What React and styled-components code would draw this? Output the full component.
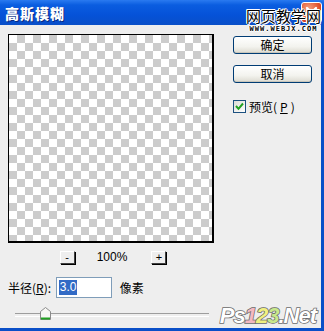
import React from 'react'
import styled, { createGlobalStyle } from 'styled-components'

const Global = createGlobalStyle`
  html, body { margin: 0; padding: 0; background: #ececec; }
  body { font-family: "Noto Sans CJK SC", "Liberation Sans", sans-serif; }
`

const Window = styled.div`
  position: relative;
  width: 324px;
  height: 331px;
  display: flex;
  flex-direction: column;
  overflow: hidden;
`

const TitleBar = styled.div`
  height: 25px;
  flex: none;
  display: flex;
  align-items: center;
  padding-left: 5px;
  background: linear-gradient(#2a7af0 0%, #0a5de0 20%, #0552d8 60%, #0a4fc8 100%);
  color: #fff;
  font-weight: 900;
  font-size: 14px;
  letter-spacing: 1px;
  text-shadow: 1px 1px 0 #0a2a80;
`

const CloseBtn = styled.div`
  position: absolute;
  top: 2px;
  right: 2px;
  width: 21px;
  height: 21px;
  border-radius: 3px;
  border: 1px solid #fff;
  box-sizing: border-box;
  background: radial-gradient(circle at 35% 30%, #f4a080, #e0502a 60%, #c03010);
  display: flex;
  align-items: center;
  justify-content: center;
`

const Stamp = styled.div`
  position: absolute;
  top: 8px;
  left: 246px;
  display: flex;
  flex-direction: column;
  align-items: center;
  gap: 3px;
  color: #000;
`

const StampTitle = styled.div`
  font-size: 15px;
  line-height: 15px;
  height: 15px;
  text-shadow: -1px 0 #fff, 1px 0 #fff, 0 -1px #fff, 0 1px #fff, 1px 1px #fff, -1px -1px #fff;
`

const StampUrl = styled.div`
  font-family: "DejaVu Sans Mono", monospace;
  font-weight: bold;
  font-size: 7px;
  line-height: 7px;
  height: 7px;
  letter-spacing: 1px;
  text-shadow: -1px 0 #fff, 1px 0 #fff, 0 -1px #fff, 0 1px #fff;
`

const Body = styled.div`
  flex: 1;
  background: #eeeeee;
  border-right: 3px solid #0a4fc8;
  border-bottom: 3px solid #0a4fc8;
  display: flex;
  flex-direction: column;
  padding: 9px 0 0 8px;
`

const Main = styled.div`
  display: flex;
  gap: 19px;
`

const LeftCol = styled.div`
  display: flex;
  flex-direction: column;
`

const Preview = styled.div`
  width: 206px;
  height: 209px;
  box-sizing: border-box;
  border: 1px solid #000;
  border-right-width: 2px;
  border-bottom-width: 2px;
  background-color: #fff;
  background-image:
    linear-gradient(45deg, #cccccc 25%, transparent 25%, transparent 75%, #cccccc 75%),
    linear-gradient(45deg, #cccccc 25%, transparent 25%, transparent 75%, #cccccc 75%);
  background-size: 16px 16px;
  background-position: 0 0, 8px 8px;
`

const ZoomRow = styled.div`
  display: flex;
  align-items: center;
  justify-content: center;
  margin-top: 7px;
  padding-left: 4px;
  font-size: 12px;
  color: #000;
`

const ZoomBtn = styled.div`
  width: 15px;
  height: 13px;
  box-sizing: border-box;
  border: 1px solid #fff;
  border-right-color: #404040;
  border-bottom-color: #404040;
  box-shadow: 1px 1px 0 #000;
  display: flex;
  align-items: center;
  justify-content: center;
  font-family: "Liberation Sans", sans-serif;
  font-size: 11px;
  line-height: 1;
`

const Percent = styled.span`
  font-family: "Liberation Sans", sans-serif;
  font-size: 12px;
  margin: 0 24px 0 22px;
`

const RightCol = styled.div`
  display: flex;
  flex-direction: column;
  padding-top: 2px;
`

const Button = styled.button`
  width: 79px;
  height: 18px;
  margin-bottom: ${p => p.$gap || 0}px;
  padding: 0;
  border: 1px solid #003c74;
  border-radius: 3px;
  background: linear-gradient(#ffffff, #f3f3ee 60%, #dcdad0);
  box-shadow: inset 0 -1px 0 #c8c6bc;
  font-family: "Noto Sans CJK SC", sans-serif;
  font-size: 12px;
  line-height: 16px;
  color: #000;
`

const CheckRow = styled.label`
  display: flex;
  align-items: center;
  gap: 3px;
  font-size: 12px;
  color: #000;
`

const CheckBox = styled.span`
  width: 13px;
  height: 13px;
  box-sizing: border-box;
  border: 1px solid #1c5180;
  background: linear-gradient(135deg, #dcdcd6, #fff);
  display: flex;
  align-items: center;
  justify-content: center;
`

const RadiusRow = styled.div`
  display: flex;
  align-items: center;
  margin-top: 13px;
  font-size: 12px;
  color: #000;
`

const Field = styled.div`
  width: 56px;
  height: 21px;
  box-sizing: border-box;
  margin-left: 2px;
  border: 1px solid #7f9db9;
  background: #fff;
  display: flex;
  align-items: center;
  padding-left: 2px;
`

const Selected = styled.span`
  background: #316ac5;
  color: #fff;
  font-family: "Liberation Sans", sans-serif;
  font-size: 12px;
  line-height: 15px;
  padding: 0 1px;
`

const Unit = styled.span`
  margin-left: 8px;
`

const SliderRow = styled.div`
  position: relative;
  width: 194px;
  height: 14px;
  margin: 9px 0 0 7px;
`

const Track = styled.div`
  position: absolute;
  left: 0;
  right: 0;
  top: 6px;
  height: 2px;
  border-top: 1px solid #9d9d9d;
  border-bottom: 1px solid #fff;
`

const Thumb = styled.svg`
  position: absolute;
  left: 25px;
  top: 0;
`

const Brand = styled.div`
  position: absolute;
  right: 8px;
  bottom: 2px;
  font-family: "Liberation Sans", sans-serif;
  font-weight: bold;
  font-style: italic;
  font-size: 22px;
  letter-spacing: -1px;
  color: #fff;
  -webkit-text-stroke: 1.5px #6a6a6a;
  paint-order: stroke fill;
`

const Accent = styled.span`
  color: ${p => p.$c};
`

export default function App() {
  return (
    <>
      <Global />
      <Window>
        <TitleBar>高斯模糊</TitleBar>
        <CloseBtn>
          <svg width="13" height="13" viewBox="0 0 13 13">
            <path d="M2 2 L11 11 M11 2 L2 11" stroke="#fff" strokeWidth="2.4" strokeLinecap="round" />
          </svg>
        </CloseBtn>
        <Stamp>
          <StampTitle>网页教学网</StampTitle>
          <StampUrl>WWW.WEBJX.COM</StampUrl>
        </Stamp>
        <Body>
          <Main>
            <LeftCol>
              <Preview />
              <ZoomRow>
                <ZoomBtn>-</ZoomBtn>
                <Percent>100%</Percent>
                <ZoomBtn>+</ZoomBtn>
              </ZoomRow>
            </LeftCol>
            <RightCol>
              <Button $gap={11}>确定</Button>
              <Button $gap={15}>取消</Button>
              <CheckRow>
                <CheckBox>
                  <svg width="9" height="9" viewBox="0 0 9 9">
                    <path d="M1 4 L3.5 6.8 L8 1.5" stroke="#21a121" strokeWidth="2" fill="none" />
                  </svg>
                </CheckBox>
                预览(<u>P</u>)
              </CheckRow>
            </RightCol>
          </Main>
          <RadiusRow>
            半径(<u>R</u>):&nbsp;
            <Field><Selected>3.0</Selected></Field>
            <Unit>像素</Unit>
          </RadiusRow>
          <SliderRow>
            <Track />
            <Thumb width="11" height="13" viewBox="0 0 11 13">
              <path d="M0.5 4.5 L5.5 0.5 L10.5 4.5 L10.5 12.5 L0.5 12.5 Z" fill="#f7f7f4" stroke="#8a8a8a" />
              <path d="M1 11.5 L10 11.5" stroke="#21a121" strokeWidth="2" />
            </Thumb>
          </SliderRow>
        </Body>
        <Brand>Ps<Accent $c="#f4b8c0">1</Accent><Accent $c="#f0f080">2</Accent><Accent $c="#c8e88c">3</Accent>.Net</Brand>
      </Window>
    </>
  )
}
